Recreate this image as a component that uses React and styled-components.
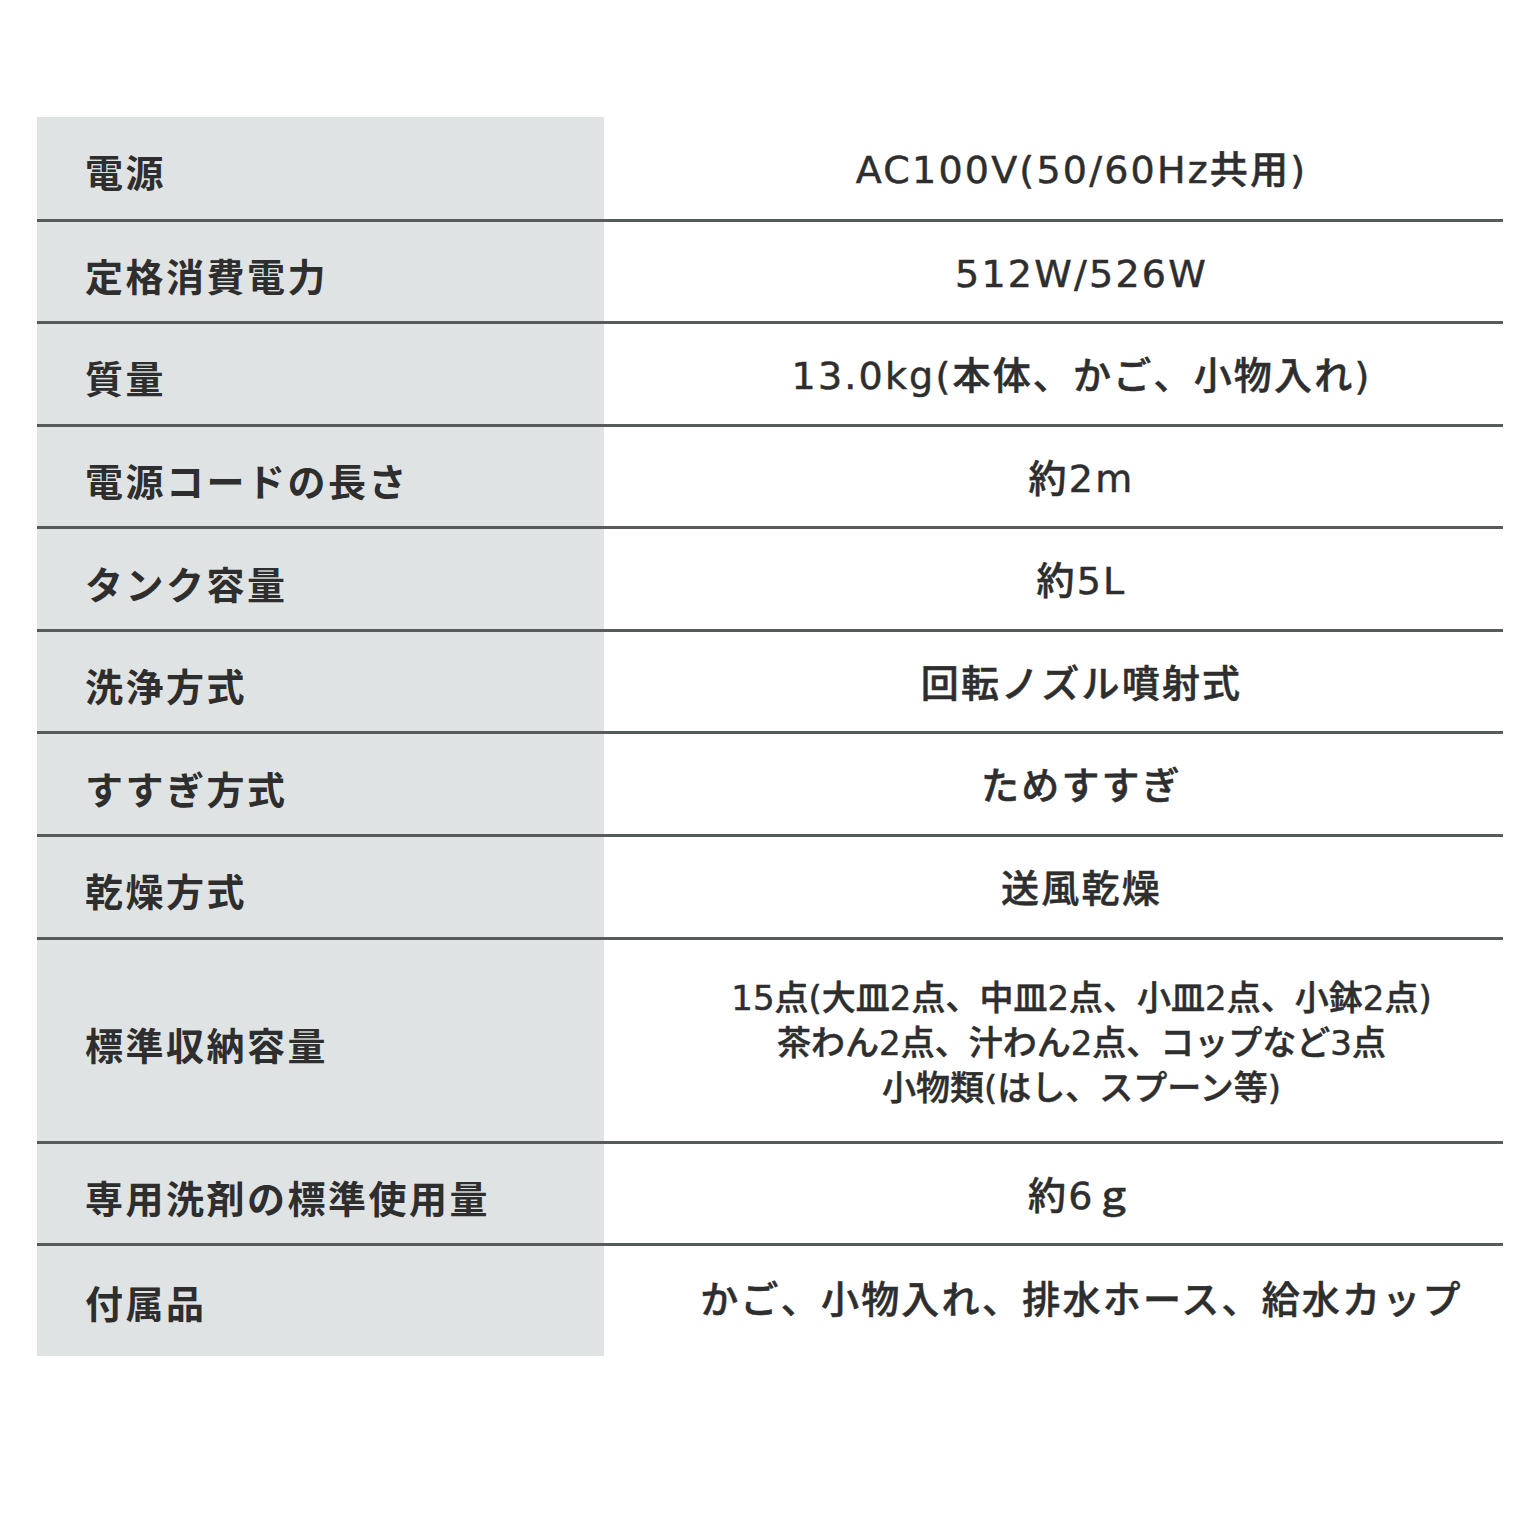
import React from "react"
import styled, { createGlobalStyle } from "styled-components"

const GlobalStyle = createGlobalStyle`
  html, body {
    margin: 0;
    padding: 0;
    background: #ffffff;
  }
  body {
    font-family: "Noto Sans CJK JP", "Noto Sans", sans-serif;
    color: #2b2b2b;
  }
`

const Page = styled.div`
  width: 1536px;
  height: 1536px;
  padding: 117px 33px 0 37px;
  box-sizing: border-box;
`

const Table = styled.div`
  display: flex;
  flex-direction: column;
  width: 1466px;
`

const Row = styled.div`
  display: grid;
  grid-template-columns: 567px 1fr;
  height: ${p => p.$height}px;
  box-sizing: border-box;
  border-bottom: ${p => (p.$last ? "none" : "3px solid #575a5a")};
`

const Label = styled.div`
  display: flex;
  align-items: center;
  padding: ${p => (p.$last ? "0" : "6px")} 0 0 48px;
  background: #dfe3e3;
  font-size: 38px;
  font-weight: 700;
  letter-spacing: 2.5px;
  color: #2e2e2e;
`

const Value = styled.div`
  display: flex;
  flex-direction: column;
  align-items: center;
  justify-content: center;
  padding: ${p => (p.$last ? "0" : "6px")} 0 0 56px;
  text-align: center;
  font-family: "DejaVu Sans", "Noto Sans CJK JP", sans-serif;
  font-size: ${p => (p.$small ? 34 : 38)}px;
  line-height: ${p => (p.$small ? "45px" : "1.2")};
  font-weight: 500;
  letter-spacing: ${p => (p.$small ? "0" : "2.2px")};
  -webkit-text-stroke: 0.5px #2e2e2e;
  color: #2e2e2e;
`

const specs = [
  { label: "電源", value: ["AC100V(50/60Hz共用)"] },
  { label: "定格消費電力", value: ["512W/526W"] },
  { label: "質量", value: ["13.0kg(本体、かご、小物入れ)"] },
  { label: "電源コードの長さ", value: ["約2m"] },
  { label: "タンク容量", value: ["約5L"] },
  { label: "洗浄方式", value: ["回転ノズル噴射式"] },
  { label: "すすぎ方式", value: ["ためすすぎ"] },
  { label: "乾燥方式", value: ["送風乾燥"] },
  {
    label: "標準収納容量",
    value: [
      "15点(大皿2点、中皿2点、小皿2点、小鉢2点)",
      "茶わん2点、汁わん2点、コップなど3点",
      "小物類(はし、スプーン等)",
    ],
    tall: true,
  },
  { label: "専用洗剤の標準使用量", value: ["約6ｇ"] },
  { label: "付属品", value: ["かご、小物入れ、排水ホース、給水カップ"] },
]

const rowHeight = (s, i) => {
  if (i === 0) return 104.5
  if (i === specs.length - 1) return 109.5
  return s.tall ? 204 : 102.6
}

export default function App() {
  return (
    <>
      <GlobalStyle />
      <Page>
        <Table>
          {specs.map((s, i) => {
            const last = i === specs.length - 1
            return (
              <Row key={s.label} $height={rowHeight(s, i)} $last={last}>
                <Label $last={last}>{s.label}</Label>
                <Value $small={s.value.length > 1} $last={last}>
                  {s.value.map(line => (
                    <div key={line}>{line}</div>
                  ))}
                </Value>
              </Row>
            )
          })}
        </Table>
      </Page>
    </>
  )
}
